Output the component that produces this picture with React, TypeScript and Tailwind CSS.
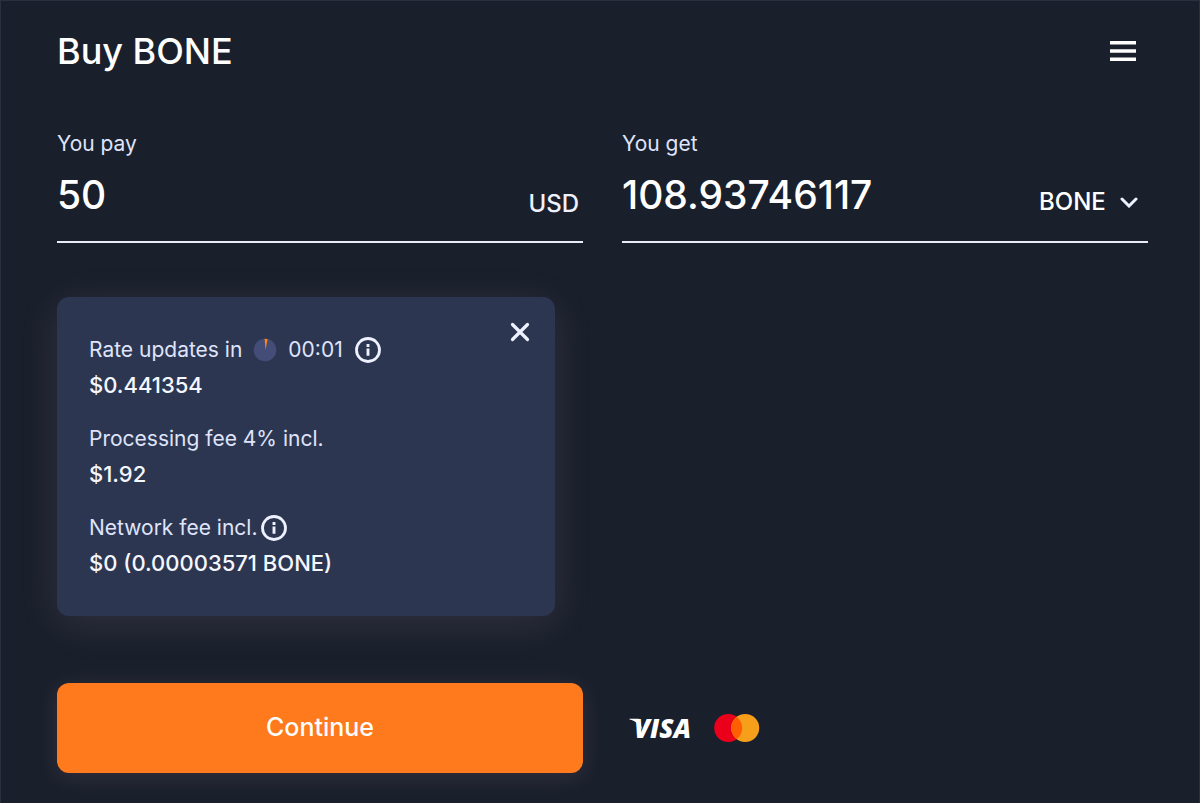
import { useState } from "react";
import type { ReactNode } from "react";

function InfoIcon() {
  return (
    <svg viewBox="0 0 26 26" className="size-[26px]" fill="none" aria-hidden="true">
      <circle cx="13" cy="13" r="11.5" stroke="#eef1ff" strokeWidth="2.8" />
      <path d="M13 11.6v7.2M13 7v3" stroke="#eef1ff" strokeWidth="2.9" />
    </svg>
  );
}

function TimerPie() {
  return (
    <svg viewBox="0 0 24 24" className="size-6" aria-hidden="true">
      <circle cx="12" cy="12" r="11.3" fill="#434d78" />
      <path d="M12.6 12 L11.6 0.7 A11.3 11.3 0 0 1 14.6 1 Z" fill="#ff8413" />
    </svg>
  );
}

function VisaLogo() {
  return (
    <svg viewBox="0 -8 66 40" className="h-10 w-[66px]" role="img" aria-label="Visa">
      <path d="M0.5 2.8h8.2c1.4 0 2.2.6 2.4 1.8l1.8 8.6C10.2 8 6.2 4.6.5 3.4Z" fill="#ffffff" />
      <text
        x="5"
        y="22"
        fill="#ffffff"
        fontFamily="'Open Sans', sans-serif"
        fontSize="26"
        fontStyle="italic"
        fontWeight="800"
      >
        VISA
      </text>
    </svg>
  );
}

function MastercardLogo() {
  return (
    <svg viewBox="0 0 46 28" className="h-7 w-[46px]" role="img" aria-label="Mastercard">
      <circle cx="14.2" cy="14" r="14" fill="#eb001b" />
      <circle cx="31.2" cy="14" r="14" fill="#f79e1b" />
      <path d="M22.7 2.88a14 14 0 0 1 0 22.24a14 14 0 0 1 0-22.24Z" fill="#ff5f00" />
    </svg>
  );
}

function DetailRow({ label, value }: { label: ReactNode; value: string }) {
  return (
    <div>
      <dt className="flex h-9 items-center text-[21px] text-[#dfe4fb]">{label}</dt>
      <dd className="h-9 text-[22px] leading-[34px] font-medium text-[#f5f7ff]">{value}</dd>
    </div>
  );
}

export default function App() {
  const [pay, setPay] = useState("50");
  const [open, setOpen] = useState(true);

  return (
    <main className="min-h-screen border border-[#2a303d] bg-[#1a1f2c] pt-6 pr-[51px] pb-[30px] pl-14 font-['Inter','Liberation_Sans',sans-serif] text-white">
      <header className="flex h-[52px] items-center justify-between pr-3">
        <h1 className="text-[36px] leading-[52px] font-medium">Buy BONE</h1>
        <button type="button" aria-label="Menu" className="cursor-pointer">
          <svg viewBox="0 0 26 20" className="h-5 w-[26px]" fill="#ffffff" aria-hidden="true">
            <path d="M0 0h26v3.5H0zM0 8.2h26v3.5H0zM0 16.4h26v3.5H0z" />
          </svg>
        </button>
      </header>

      <form onSubmit={(e) => e.preventDefault()}>
        <div className="mt-[51px] grid grid-cols-2 gap-[39px]">
          <div className="border-b-2 border-[#e9ecf8]">
            <label htmlFor="pay" className="block text-[21px] leading-8 text-[#dfe4fb]">
              You pay
            </label>
            <div className="flex h-[81px] items-start justify-between pt-2 pr-1">
              <input
                id="pay"
                inputMode="decimal"
                value={pay}
                onChange={(e) => setPay(e.target.value)}
                className="h-[54px] w-full min-w-0 flex-1 bg-transparent text-[39px] font-medium outline-none"
              />
              <span className="pt-[18px] text-[24px] leading-9 font-medium text-[#eef1ff]">USD</span>
            </div>
          </div>

          <div className="border-b-2 border-[#e9ecf8]">
            <label htmlFor="get" className="block text-[21px] leading-8 text-[#dfe4fb]">
              You get
            </label>
            <div className="flex h-[81px] items-start justify-between pt-2 pr-[10px]">
              <input
                id="get"
                readOnly
                value="108.93746117"
                className="h-[54px] w-full min-w-0 flex-1 bg-transparent text-[39px] font-medium outline-none"
              />
              <div className="flex items-center gap-[14px] pt-4">
                <select
                  aria-label="Currency"
                  className="h-9 cursor-pointer appearance-none bg-transparent text-[24px] leading-9 font-medium text-white outline-none"
                >
                  <option>BONE</option>
                </select>
                <svg viewBox="0 0 18 12" className="h-3 w-[18px]" fill="none" aria-hidden="true">
                  <path d="M2 3l7 7 7-7" stroke="#eef1ff" strokeWidth="3" strokeLinecap="round" />
                </svg>
              </div>
            </div>
          </div>
        </div>

        <div className="mt-[54px] grid grid-cols-2 gap-[39px]">
          {open && (
            <section
              aria-label="Rate details"
              className="mr-7 flex items-start justify-between rounded-xl bg-[#2d3650] pt-[35px] pr-6 pb-[34px] pl-8 shadow-[0_8px_40px_rgba(255,220,220,0.1)]"
            >
              <dl className="flex flex-col gap-[17px]">
                <DetailRow
                  label={
                    <>
                      Rate updates in
                      <span className="mr-[11px] ml-[11px]">
                        <TimerPie />
                      </span>
                      00:01
                      <button type="button" aria-label="About the rate" className="ml-3 cursor-pointer">
                        <InfoIcon />
                      </button>
                    </>
                  }
                  value="$0.441354"
                />
                <DetailRow label="Processing fee 4% incl." value="$1.92" />
                <DetailRow
                  label={
                    <>
                      Network fee incl.
                      <button type="button" aria-label="About the network fee" className="ml-1 cursor-pointer">
                        <InfoIcon />
                      </button>
                    </>
                  }
                  value="$0 (0.00003571 BONE)"
                />
              </dl>
              <button type="button" aria-label="Close" onClick={() => setOpen(false)} className="-mt-[11px] cursor-pointer">
                <svg viewBox="0 0 22 22" className="size-[22px]" fill="none" aria-hidden="true">
                  <path d="M3.5 3.5l15 15M18.5 3.5l-15 15" stroke="#eef1ff" strokeWidth="3.2" strokeLinecap="round" />
                </svg>
              </button>
            </section>
          )}
        </div>

        <div className="mt-[67px] grid grid-cols-2 items-center gap-[39px]">
          <button
            type="submit"
            className="h-[90px] cursor-pointer rounded-xl bg-[#ff7a1c] pb-px text-[25px] font-medium shadow-[0_4px_24px_rgba(255,220,220,0.1)]"
          >
            Continue
          </button>
          <div className="flex items-center gap-[19px] pl-[7px]">
            <VisaLogo />
            <MastercardLogo />
          </div>
        </div>
      </form>
    </main>
  );
}
